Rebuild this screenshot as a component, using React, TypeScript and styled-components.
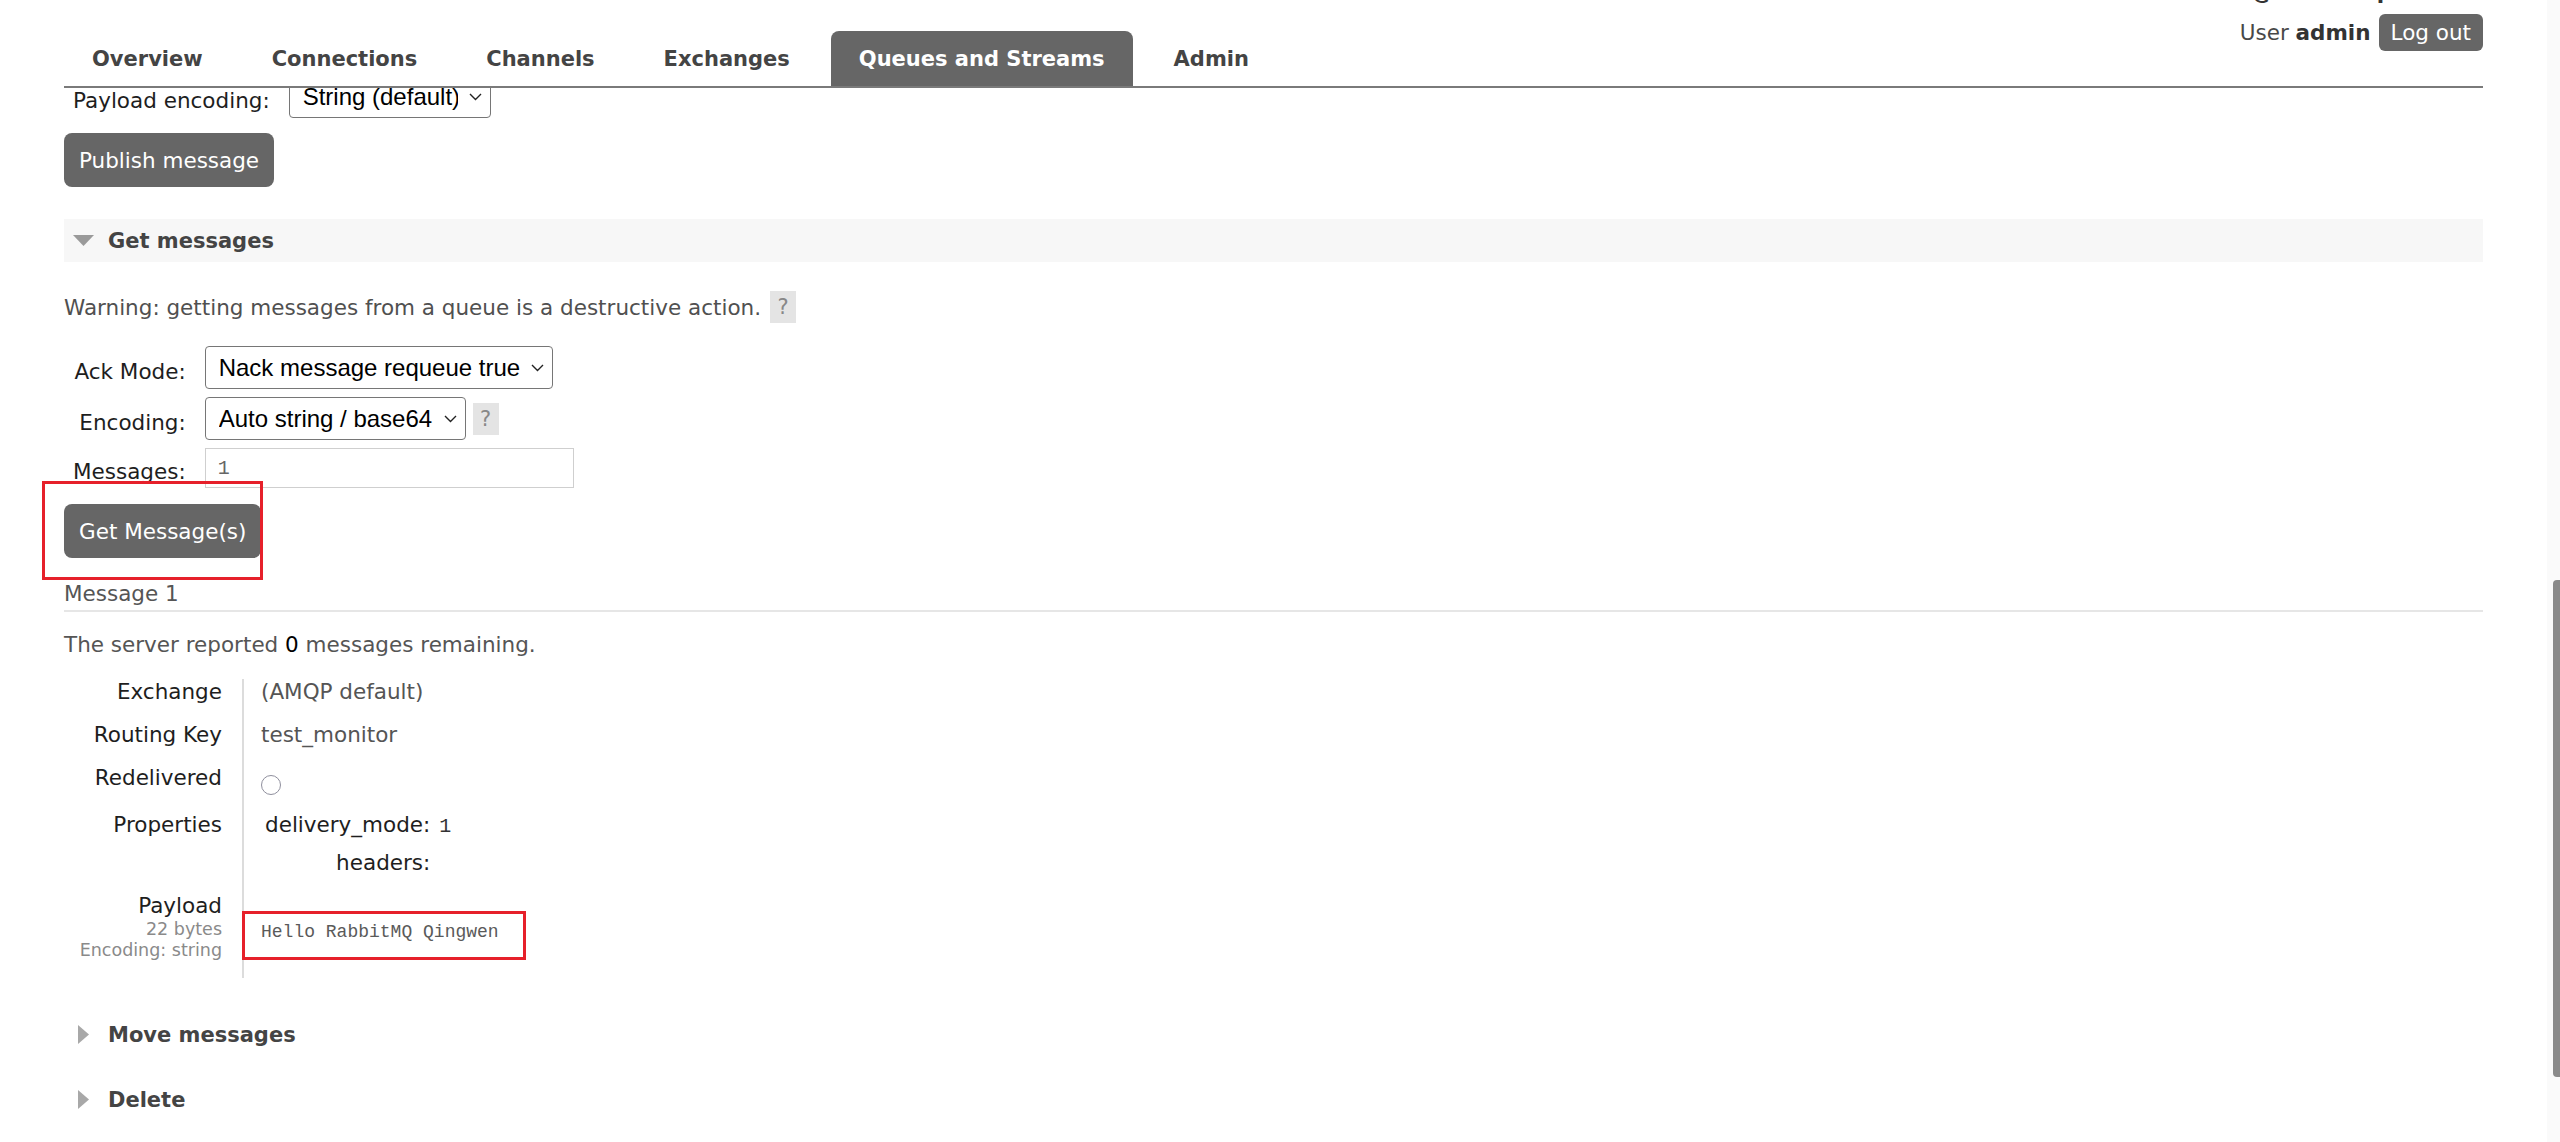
import React from "react";
import styled, { createGlobalStyle } from "styled-components";

const GlobalStyle = createGlobalStyle`
  * { box-sizing: border-box; }
  html, body { margin: 0; padding: 0; height: 100%; overflow: hidden; background: #fff; }
  body {
    font-family: "DejaVu Sans", Verdana, sans-serif;
    font-size: 21.5px;
    color: #484848;
  }
  #root { height: 100%; }
`;

const Page = styled.div`
  display: flex;
  height: 100vh;
`;

const Main = styled.div`
  flex: 1;
  min-width: 0;
  display: flex;
  flex-direction: column;
  padding: 0 64px;
`;

/* ---------- header ---------- */

const Header = styled.header`
  flex-shrink: 0;
  display: flex;
  justify-content: space-between;
  align-items: flex-start;
  height: 88px;
  border-bottom: 2px solid #7a7a7a;
`;

const Tabs = styled.nav`
  display: flex;
  gap: 13px;
  align-self: flex-end;
`;

const Tab = styled.a<{ $active?: boolean }>`
  display: flex;
  align-items: center;
  height: 55px;
  padding: 0 28px;
  font-weight: bold;
  font-size: 21px;
  text-decoration: none;
  color: ${(p) => (p.$active ? "#fff" : "#444")};
  background: ${(p) => (p.$active ? "#666" : "transparent")};
  border-radius: 8px 8px 0 0;
`;

const Account = styled.div`
  display: flex;
  flex-direction: column;
  align-items: flex-end;
  margin-top: -21px;
`;

const AccountLine = styled.div`
  line-height: 26px;
  color: #484848;
  b { color: #333; }
`;

const UserLine = styled.div`
  display: flex;
  align-items: center;
  gap: 8px;
  margin-top: 9px;
  line-height: 26px;
  b { color: #333; }
`;

const LogOut = styled.button`
  height: 37px;
  padding: 0 12px;
  background: #666;
  color: #fff;
  border: 0;
  border-radius: 6px;
  font-family: inherit;
  font-size: 21.5px;
`;

/* ---------- scrolled content ---------- */

const Viewport = styled.div`
  flex: 1;
  overflow: hidden;
  margin-left: -64px;
  padding-left: 64px;
`;

const Content = styled.div`
  margin-top: -13px;
`;

const FormGrid = styled.div`
  display: grid;
  grid-template-columns: auto auto;
  justify-content: start;
  align-items: center;
  row-gap: 8px;
`;

const FieldLabel = styled.label`
  padding: 7px 19px 0 9px;
  text-align: right;
  white-space: nowrap;
  color: #1e1e1e;
`;

const Field = styled.div`
  display: flex;
  align-items: center;
  gap: 7px;
`;

const SelectWrap = styled.span`
  position: relative;
  display: inline-flex;
`;

const Select = styled.select<{ $w: number }>`
  appearance: none;
  width: ${(p) => p.$w}px;
  height: 43px;
  padding: 0 32px 0 13px;
  font-family: "Liberation Sans", Arial, sans-serif;
  font-size: 24px;
  color: #000;
  background: #fff;
  border: 1px solid #767676;
  border-radius: 4px;
`;

const Chevron = styled.svg`
  position: absolute;
  right: 9px;
  top: 50%;
  transform: translateY(-50%);
  pointer-events: none;
`;

const TextInput = styled.input`
  width: 369px;
  height: 40px;
  padding: 0 12px;
  border: 1px solid #cfcfcf;
  font-family: "Liberation Mono", "DejaVu Sans Mono", monospace;
  font-size: 20px;
  color: #666;
  background: #fff;
`;

const Help = styled.span`
  display: inline-flex;
  align-items: center;
  justify-content: center;
  width: 26px;
  height: 32px;
  background: #e4e4e4;
  color: #888;
  font-size: 21px;
`;

const Button = styled.button`
  height: 54px;
  padding: 0 15px;
  background: #666;
  color: #fff;
  border: 0;
  border-radius: 8px;
  font-family: inherit;
  font-size: 21.5px;
`;

const ButtonRow = styled.div<{ $top: number }>`
  margin-top: ${(p) => p.$top}px;
`;

const Marked = styled.span<{ $inset: string }>`
  position: relative;
  display: inline-block;
  &::after {
    content: "";
    position: absolute;
    inset: ${(p) => p.$inset};
    border: 3px solid #e6202a;
    pointer-events: none;
  }
`;

const SectionHead = styled.div<{ $open?: boolean; $top: number }>`
  display: flex;
  align-items: center;
  gap: 14px;
  height: 43px;
  margin-top: ${(p) => p.$top}px;
  padding-left: 9px;
  font-weight: bold;
  font-size: 21px;
  color: #444;
  background: ${(p) => (p.$open ? "#f7f7f7" : "transparent")};
`;

const Caret = styled.span`
  width: 21px;
  display: flex;
  justify-content: center;
  align-items: center;
`;

const Warning = styled.div`
  display: flex;
  align-items: center;
  gap: 9px;
  height: 32px;
  margin-top: 29px;
  color: #505050;
`;

const FormBlock = styled.div`
  margin-top: 23px;
`;

const MessageTitle = styled.div`
  margin-top: 23px;
  line-height: 25px;
  padding-bottom: 4px;
  border-bottom: 2px solid #e6e6e6;
  color: #555;
`;

const Remaining = styled.p`
  margin: 20px 0 0;
  line-height: 26px;
  color: #555;
  b { font-weight: normal; color: #000; }
`;

const Details = styled.div`
  display: grid;
  grid-template-columns: 178px 1fr;
  margin-top: 21px;
`;

const Key = styled.div`
  padding: 0 20px 17px 0;
  text-align: right;
  line-height: 26px;
  color: #1e1e1e;
`;

const KeyNote = styled.div`
  font-size: 17.5px;
  line-height: 21px;
  color: #8a8a8a;
`;

const Value = styled.div<{ $padTop?: number }>`
  position: relative;
  border-left: 2px solid #dcdcdc;
  padding: ${(p) => p.$padTop ?? 0}px 0 17px 17px;
  line-height: 26px;
  color: #555;
`;

const Radio = styled.span`
  display: block;
  width: 20px;
  height: 20px;
  border-radius: 50%;
  border: 1px solid #8f8f9d;
  background: #fff;
`;

const Props = styled.div`
  display: grid;
  grid-template-columns: auto auto;
  justify-content: start;
  align-items: baseline;
  row-gap: 10px;
`;

const PropKey = styled.span`
  padding-left: 4px;
  text-align: right;
  color: #1e1e1e;
`;

const PropValue = styled.span`
  padding-left: 9px;
  font-family: "Liberation Mono", "DejaVu Sans Mono", monospace;
  font-size: 20px;
  color: #333;
`;

const Payload = styled.pre`
  margin: 0;
  display: inline-block;
  font-family: "Liberation Mono", "DejaVu Sans Mono", monospace;
  font-size: 18px;
  line-height: 28px;
  color: #5a5a5a;
`;

/* ---------- scrollbar ---------- */

const Track = styled.div`
  flex-shrink: 0;
  width: 13px;
  background: #fafafa;
  display: flex;
  justify-content: flex-end;
  align-items: flex-start;
`;

const Thumb = styled.div`
  width: 7px;
  height: 497px;
  margin-top: 580px;
  background: #8a8a8a;
  border-radius: 4px 0 0 4px;
`;

const DownCaret = () => (
  <svg width="21" height="11" viewBox="0 0 21 11">
    <polygon points="0,0 21,0 10.5,11" fill="#9a9a9a" />
  </svg>
);

const RightCaret = () => (
  <svg width="11" height="19" viewBox="0 0 11 19">
    <polygon points="0,0 11,9.5 0,19" fill="#a8a8a8" />
  </svg>
);

const Dropdown = ({ width, value }: { width: number; value: string }) => (
  <SelectWrap>
    <Select $w={width} defaultValue={value}>
      <option>{value}</option>
    </Select>
    <Chevron width="13" height="8" viewBox="0 0 13 8">
      <polyline points="1,1 6.5,6.5 12,1" fill="none" stroke="#222" strokeWidth="1.4" />
    </Chevron>
  </SelectWrap>
);

const tabs = ["Overview", "Connections", "Channels", "Exchanges", "Queues and Streams", "Admin"];

export default function App() {
  return (
    <>
      <GlobalStyle />
      <Page>
        <Main>
          <Header>
            <Tabs>
              {tabs.map((t) => (
                <Tab key={t} $active={t === "Queues and Streams"}>
                  {t}
                </Tab>
              ))}
            </Tabs>
            <Account>
              <AccountLine>
                Cluster <b>rabbit@rabbitmq-node02</b>
              </AccountLine>
              <UserLine>
                <span>
                  User <b>admin</b>
                </span>
                <LogOut>Log out</LogOut>
              </UserLine>
            </Account>
          </Header>

          <Viewport>
            <Content>
              <FormGrid>
                <FieldLabel>Payload encoding:</FieldLabel>
                <Field>
                  <Dropdown width={202} value="String (default)" />
                </Field>
              </FormGrid>
              <ButtonRow $top={15}>
                <Button>Publish message</Button>
              </ButtonRow>

              <SectionHead $open $top={32}>
                <Caret>
                  <DownCaret />
                </Caret>
                Get messages
              </SectionHead>

              <Warning>
                Warning: getting messages from a queue is a destructive action.
                <Help>?</Help>
              </Warning>

              <FormBlock>
                <FormGrid>
                  <FieldLabel>Ack Mode:</FieldLabel>
                  <Field>
                    <Dropdown width={348} value="Nack message requeue true" />
                  </Field>
                  <FieldLabel>Encoding:</FieldLabel>
                  <Field>
                    <Dropdown width={261} value="Auto string / base64" />
                    <Help>?</Help>
                  </Field>
                  <FieldLabel>Messages:</FieldLabel>
                  <Field>
                    <TextInput defaultValue="1" />
                  </Field>
                </FormGrid>
              </FormBlock>

              <ButtonRow $top={16}>
                <Marked $inset="-23px -2px -22px -22px">
                  <Button>Get Message(s)</Button>
                </Marked>
              </ButtonRow>

              <MessageTitle>Message 1</MessageTitle>
              <Remaining>
                The server reported <b>0</b> messages remaining.
              </Remaining>

              <Details>
                <Key>Exchange</Key>
                <Value>(AMQP default)</Value>

                <Key>Routing Key</Key>
                <Value>test_monitor</Value>

                <Key>Redelivered</Key>
                <Value $padTop={10}>
                  <Radio />
                </Value>

                <Key>Properties</Key>
                <Value>
                  <Props>
                    <PropKey>delivery_mode:</PropKey>
                    <PropValue>1</PropValue>
                    <PropKey>headers:</PropKey>
                    <PropValue />
                  </Props>
                </Value>

                <Key>
                  Payload
                  <KeyNote>22 bytes</KeyNote>
                  <KeyNote>Encoding: string</KeyNote>
                </Key>
                <Value $padTop={24}>
                  <Marked $inset="-6px -27px -14px -19px">
                    <Payload>Hello RabbitMQ Qingwen</Payload>
                  </Marked>
                </Value>
              </Details>

              <SectionHead $top={35}>
                <Caret>
                  <RightCaret />
                </Caret>
                Move messages
              </SectionHead>
              <SectionHead $top={22}>
                <Caret>
                  <RightCaret />
                </Caret>
                Delete
              </SectionHead>
            </Content>
          </Viewport>
        </Main>
        <Track>
          <Thumb />
        </Track>
      </Page>
    </>
  );
}
